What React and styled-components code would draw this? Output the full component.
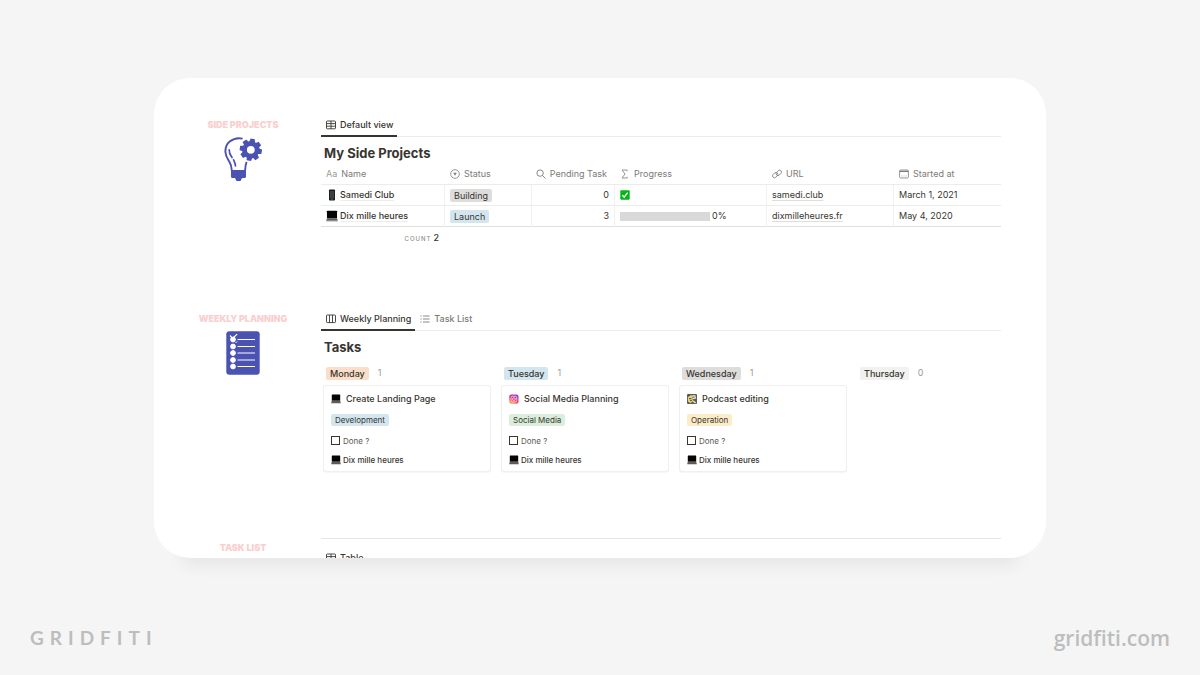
import { useState } from 'react';
import styled, { createGlobalStyle } from 'styled-components';

const GlobalStyle = createGlobalStyle`
	* {
		box-sizing: border-box;
	}

	body {
		margin: 0;
		background: #f5f5f5;
		color: #37352f;
		font-family: Inter, 'Liberation Sans', sans-serif;
		font-size: 9px;
		line-height: 20px;
	}

	button,
	input {
		font: inherit;
		color: inherit;
	}

	svg {
		display: block;
		flex-shrink: 0;
	}
`;

const Page = styled.div`
	display: flex;
	flex-direction: column;
	height: 100vh;
	padding: 78px 30px 0;
`;

const Sheet = styled.main`
	flex: 1;
	min-height: 0;
	margin: 0 124px;
	padding: 36px 45px 0 22px;
	overflow: hidden;
	background: #fff;
	border-radius: 36px;
	box-shadow: 0 34px 16px -26px rgba(0, 0, 0, 0.06);
`;

const Footer = styled.footer`
	display: flex;
	align-items: center;
	justify-content: space-between;
	height: 117px;
	padding-top: 42px;
	color: #bdbdbd;
`;

const Brand = styled.span`
	font-family: Lato, sans-serif;
	font-size: 19px;
	font-weight: 700;
	letter-spacing: 6px;
`;

const SiteLink = styled.a`
	color: inherit;
	font-family: 'Open Sans', sans-serif;
	font-size: 21px;
	font-weight: 600;
	text-decoration: none;
`;

const Section = styled.section`
	display: grid;
	grid-template-columns: 134px minmax(0, 1fr);
	column-gap: 11px;
	padding-bottom: 59px;
`;

const Aside = styled.div`
	display: flex;
	flex-direction: column;
	align-items: center;
	gap: 2px;
	padding-top: 1px;
`;

const AsideTitle = styled.h2`
	margin: 0;
	color: #f9cfd0;
	font-size: 9px;
	font-weight: 900;
	line-height: 20px;
	text-transform: uppercase;
`;

const Content = styled.div`
	${({ $divided }) => $divided && 'padding-top: 8px; margin-top: 1px; border-top: 1px solid #e6e6e5;'}
`;

const Tabs = styled.div`
	display: flex;
	height: 23px;
	border-bottom: 1px solid #ececeb;
`;

const Tab = styled.button`
	display: flex;
	align-items: center;
	gap: 4px;
	height: 23px;
	padding: 0 4px 0 5px;
	border: 0;
	border-bottom: 2px solid ${({ $active }) => ($active ? '#37352f' : 'transparent')};
	background: none;
	color: ${({ $active }) => ($active ? '#37352f' : '#7c7b77')};
	font-weight: 500;
	cursor: pointer;
`;

const Heading = styled.h3`
	margin: 0;
	padding: 6px 3px 0;
	font-size: 13px;
	font-weight: 700;
	line-height: 20px;
`;

const Table = styled.table`
	width: 100%;
	table-layout: fixed;
	border-spacing: 0;
`;

const HeadCell = styled.th`
	width: ${({ $width }) => $width || 'auto'};
	height: 22px;
	padding: 0 ${({ $end }) => ($end ? '8px' : '5px')} 0 5px;
	border-bottom: 1px solid #ececeb;
	color: #7c7b77;
	font-weight: 400;
	text-align: left;
`;

const HeadLabel = styled.span`
	display: flex;
	align-items: center;
	justify-content: ${({ $end }) => ($end ? 'flex-end' : 'flex-start')};
	gap: 4px;
	white-space: nowrap;
`;

const TextGlyph = styled.span`
	color: #9b9a97;
`;

const Cell = styled.td`
	height: 21px;
	padding: 0 5px;
	border-right: 1px solid #f1f1f0;
	border-bottom: 1px solid ${({ $last }) => ($last ? '#dfdfde' : '#ececeb')};
	text-align: ${({ $end }) => ($end ? 'right' : 'left')};

	&:last-child {
		border-right: 0;
	}
`;

const CellRow = styled.div`
	display: flex;
	align-items: center;
	gap: 2px;
`;

const ProjectName = styled.span`
	font-weight: 500;
	text-decoration: underline;
	text-decoration-color: #ededec;
	text-underline-offset: 2px;
`;

const CellLink = styled.a`
	color: inherit;
	text-decoration: underline;
	text-decoration-color: #dededc;
	text-underline-offset: 2px;
`;

const Track = styled.span`
	width: 90px;
	height: 9px;
	background: #d9d9d9;
`;

const Fill = styled.span`
	display: block;
	height: 100%;
	background: #00b312;
`;

const FootCell = styled.td`
	height: 22px;
	padding: 0 6px;
	font-size: 9px;
	font-weight: 500;
	text-align: right;
`;

const CountLabel = styled.span`
	margin-right: 2px;
	color: #8f8e8b;
	font-size: 6px;
	font-weight: 500;
	letter-spacing: 1px;
	text-transform: uppercase;
`;

const tones = {
	gray: '#dedddb',
	light: '#f1f1ef',
	blue: '#d3e5ef',
	orange: '#fadec9',
	green: '#dbeddb',
	yellow: '#fdecc8',
};

const Pill = styled.span`
	padding: 0 4px;
	border-radius: 2px;
	background: ${({ $tone }) => tones[$tone]};
	font-size: ${({ $small }) => ($small ? '8px' : '9px')};
	font-weight: ${({ $bold }) => ($bold ? 500 : 400)};
	line-height: ${({ $small }) => ($small ? '12px' : '13px')};
`;

const Board = styled.div`
	display: flex;
	gap: 12px;
	padding: 6px 0 7px 3px;
	overflow: hidden;
`;

const Column = styled.div`
	flex: 0 0 166px;
`;

const ColumnHead = styled.div`
	display: flex;
	align-items: center;
	gap: 9px;
	height: 20px;
	margin-bottom: 3px;
	padding-left: 2px;
	color: #9b9a97;
`;

const ColumnPill = styled(Pill)`
	color: #37352f;
`;

const Card = styled.article`
	display: flex;
	flex-direction: column;
	align-items: flex-start;
	padding: 3px 7px 2px;
	border-radius: 2px;
	box-shadow: 0 0 0 1px #f0f0f0, 0 1px 2px rgba(15, 15, 15, 0.14);
	font-size: 8px;
`;

const CardTitle = styled.h4`
	display: flex;
	align-items: center;
	gap: 5px;
	margin: 0;
	font-size: 9px;
	font-weight: 500;
	line-height: 20px;
`;

const CardTag = styled.div`
	display: flex;
	align-items: center;
	height: 22px;
`;

const CardLine = styled.div`
	display: flex;
	align-items: center;
	gap: 2px;
	height: 19px;
`;

const CheckLabel = styled.label`
	display: flex;
	align-items: center;
	gap: 3px;
	height: 19px;
	color: #5a5955;
`;

const Checkbox = styled.input.attrs({ type: 'checkbox' })`
	appearance: none;
	width: 9px;
	height: 9px;
	margin: 0;
	border: 1px solid #37352f;

	&:checked {
		background: #2eaadc;
	}
`;

const Relation = styled.span`
	font-weight: 500;
`;

const LineIcon = ({ children, size = 10, width = 1 }) => (
	<svg width={size} height={size} viewBox="0 0 10 10" fill="none" stroke="currentColor" strokeWidth={width} aria-hidden="true">
		{children}
	</svg>
);

const TableIcon = () => (
	<LineIcon width={0.9}>
		<rect x="0.5" y="1" width="9" height="7.8" rx="0.8" />
		<path d="M.5 3.6h9M.5 6.200h9M5 1v7.800" />
	</LineIcon>
);

const BoardIcon = () => (
	<LineIcon width={0.9}>
		<rect x="0.5" y="1" width="9" height="7.6" rx="0.8" />
		<path d="M3.5 1v7.6M6.5 1v7.6" />
	</LineIcon>
);

const ListIcon = () => (
	<LineIcon width={0.9}>
		<path d="M.4 2h1.2M.4 5h1.2M.4 8h1.2M3 2h6.6M3 5h6.6M3 8h6.6" />
	</LineIcon>
);

const SelectIcon = () => (
	<LineIcon width={0.8}>
		<circle cx="5" cy="5" r="4.3" />
		<path d="M3.2 3.800h3.600L5 6.800z" fill="currentColor" stroke="none" />
	</LineIcon>
);

const SearchIcon = () => (
	<LineIcon width={0.9}>
		<circle cx="4.1" cy="4.1" r="3.2" />
		<path d="M6.5 6.5l3 3" />
	</LineIcon>
);

const SigmaIcon = () => (
	<LineIcon width={0.8}>
		<path d="M7.2 2.2V1H2l3 4-3 4h5.2V7.8" />
	</LineIcon>
);

const LinkIcon = () => (
	<LineIcon width={0.8}>
		<rect x="0.2" y="4.2" width="6" height="3.8" rx="1.9" transform="rotate(-45 3.2 6.1)" />
		<rect x="3.8" y="2" width="6" height="3.8" rx="1.9" transform="rotate(-45 6.8 3.9)" />
	</LineIcon>
);

const CalendarIcon = () => (
	<LineIcon width={0.8}>
		<rect x="0.6" y="1" width="8.8" height="8" rx="1.2" />
		<path d="M.6 2.4h8.8" strokeWidth="1.4" />
		<path d="M2.5 7h1M4.500 7h1M6.500 7h1" strokeWidth="0.5" />
	</LineIcon>
);

const PhoneIcon = () => (
	<svg width="12" height="12" viewBox="0 0 12 12" aria-hidden="true">
		<rect x="3" y="0.5" width="6" height="11" rx="0.8" fill="#1d1f1e" />
		<rect x="4" y="2" width="4" height="7.6" fill="#3a403d" />
		<path d="M5.2 10.6h1.8" stroke="#777" strokeWidth="0.6" />
	</svg>
);

const LaptopIcon = ({ size = 10 }) => (
	<svg width={size} height={size} viewBox="0 0 10 10" aria-hidden="true">
		<rect x="0.8" y="0.6" width="8.400" height="6.200" rx="0.4" fill="#050505" />
		<path d="M.8 6.800h8.400l.6 2.200H.2z" fill="#5c5c5c" />
		<path d="M.2 9h9.600v.5H.2z" fill="#a8a8a8" />
	</svg>
);

const CheckMarkIcon = () => (
	<svg width="10" height="10" viewBox="0 0 10 10" aria-hidden="true">
		<rect x="0.3" y="0.3" width="9.4" height="9.4" rx="1" fill="#05b416" />
		<path d="M2.4 5.2l1.8 2L7.6 2.6" fill="none" stroke="#fff" strokeWidth="1.3" />
	</svg>
);

const InstagramIcon = () => (
	<svg width="10" height="10" viewBox="0 0 10 10" aria-hidden="true">
		<defs>
			<linearGradient id="insta" x1="0.2" y1="1" x2="0.7" y2="0">
				<stop offset="0" stopColor="#fdb03c" />
				<stop offset="0.45" stopColor="#ec2f72" />
				<stop offset="1" stopColor="#8a3bd0" />
			</linearGradient>
		</defs>
		<rect x="0.3" y="0.5" width="9.2" height="9.2" rx="2" fill="url(#insta)" />
		<g fill="none" stroke="#fff" strokeWidth="0.7">
			<rect x="2" y="2.2" width="5.8" height="5.8" rx="1.6" />
			<circle cx="4.9" cy="5.1" r="1.4" />
		</g>
	</svg>
);

const PodcastIcon = () => (
	<svg width="10" height="10" viewBox="0 0 10 10" aria-hidden="true">
		<rect width="10" height="10" rx="1" fill="#5c5d52" />
		<path d="M.8 3.2l2.4-2 3 .6-1 2.4 1 2.6-2.6 2.4-2.6-1.6z" fill="#e3d27a" />
		<path d="M5.600 1.6l3 .6M5.6 4.6l3.4-.8M6 7l2.600 1.800" stroke="#efecdc" strokeWidth="1.4" />
		<path d="M2 4.6h2.4M3 6.4h2M1 .8l1.4 1" stroke="#33352f" strokeWidth="0.8" />
	</svg>
);

const teeth = [0, 45, 90, 135, 180, 225, 270, 315];

const IdeaIcon = () => (
	<svg width="38" height="44" viewBox="0 0 38 44" fill="none" stroke="#4a52b2" aria-hidden="true">
		<path d="M18.600 1.700C14.400.6 9.400 1.700 5.700 4.600C2.600 7.200 1.200 10.800 1.400 15C1.600 19.200 3.600 21.800 5.300 24.600C7 27.400 7.600 29.600 7.800 33.500" strokeWidth="1.900" />
		<path d="M22.600 24.800C21.500 27.400 21.300 30 21.100 33.500" strokeWidth="1.900" />
		<path d="M5.200 12.800C5 16.500 6.200 18.300 8 20.600M9.600 22.800C10.600 24.800 11.200 26.600 11.500 28.800" strokeWidth="1.700" strokeLinecap="round" />
		<g fill="#4a52b2" stroke="none">
			<path d="M7 33h15v6.500q0 1.500-1.500 1.500h-2.500l-1.500 3h-4l-1.500-3h-2.500Q7 41 7 39.500z" />
			{teeth.map((angle) => (
				<path key={angle} d="M23.900 5.500L24.600 1.700h4.400L29.700 5.500z" transform={`rotate(${angle + 10} 26.800 12.800)`} />
			))}
		</g>
		<circle cx="26.800" cy="12.800" r="6.300" strokeWidth="4.800" />
	</svg>
);

const ChecklistIcon = () => (
	<svg width="34" height="44" viewBox="0 0 34 44" aria-hidden="true">
		<rect x="0.3" y="0.3" width="33.400" height="43.400" rx="3" fill="#4a52b2" />
		<g stroke="#fff" strokeWidth="1" fill="#fff">
			{[8.500, 15.500, 22, 29, 35.500].map((y) => (
				<g key={y}>
					<circle cx="7" cy={y} r="2.400" />
					<path d={`M11.500 ${y}h17.500`} />
				</g>
			))}
		</g>
		<path d="M4 4.500l2.600 2.800 4.600-4.200" fill="none" stroke="#fff" strokeWidth="1.200" />
		<path d="M9.500 12l1.600-1.600" fill="none" stroke="#fff" strokeWidth="1" />
	</svg>
);

const projects = [
	{ name: 'Samedi Club', icon: <PhoneIcon />, status: 'Building', tone: 'gray', pending: 0, done: true, url: 'samedi.club', started: 'March 1, 2021' },
	{ name: 'Dix mille heures', icon: <LaptopIcon size={12} />, status: 'Launch', tone: 'blue', pending: 3, progress: 0, url: 'dixmilleheures.fr', started: 'May 4, 2020' },
];

const days = [
	{ day: 'Monday', tone: 'orange', tasks: [{ title: 'Create Landing Page', icon: <LaptopIcon />, tag: 'Development', tone: 'blue' }] },
	{ day: 'Tuesday', tone: 'blue', tasks: [{ title: 'Social Media Planning', icon: <InstagramIcon />, tag: 'Social Media', tone: 'green' }] },
	{ day: 'Wednesday', tone: 'gray', tasks: [{ title: 'Podcast editing', icon: <PodcastIcon />, tag: 'Operation', tone: 'yellow' }] },
	{ day: 'Thursday', tone: 'light', tasks: [] },
];

const ProjectsTable = () => (
	<Table>
		<thead>
			<tr>
				<HeadCell $width="124px">
					<HeadLabel>
						<TextGlyph>Aa</TextGlyph>Name
					</HeadLabel>
				</HeadCell>
				<HeadCell $width="87px">
					<HeadLabel><SelectIcon />Status</HeadLabel>
				</HeadCell>
				<HeadCell $width="83px" $end>
					<HeadLabel $end><SearchIcon />Pending Task</HeadLabel>
				</HeadCell>
				<HeadCell $width="152px">
					<HeadLabel><SigmaIcon />Progress</HeadLabel>
				</HeadCell>
				<HeadCell $width="127px">
					<HeadLabel><LinkIcon />URL</HeadLabel>
				</HeadCell>
				<HeadCell>
					<HeadLabel><CalendarIcon />Started at</HeadLabel>
				</HeadCell>
			</tr>
		</thead>
		<tbody>
			{projects.map((project, index) => {
				const last = index === projects.length - 1;
				return (
					<tr key={project.name}>
						<Cell $last={last}>
							<CellRow>
								{project.icon}
								<ProjectName>{project.name}</ProjectName>
							</CellRow>
						</Cell>
						<Cell $last={last}>
							<CellRow>
								<Pill $tone={project.tone}>{project.status}</Pill>
							</CellRow>
						</Cell>
						<Cell $last={last} $end>{project.pending}</Cell>
						<Cell $last={last}>
							<CellRow>
								{project.done ? (
									<CheckMarkIcon />
								) : (
									<>
										<Track>
											<Fill style={{ width: `${project.progress}%` }} />
										</Track>
										{project.progress}%
									</>
								)}
							</CellRow>
						</Cell>
						<Cell $last={last}>
							<CellLink href={`https://${project.url}`}>{project.url}</CellLink>
						</Cell>
						<Cell $last={last}>{project.started}</Cell>
					</tr>
				);
			})}
		</tbody>
		<tfoot>
			<tr>
				<FootCell>
					<CountLabel>Count</CountLabel>
					{projects.length}
				</FootCell>
			</tr>
		</tfoot>
	</Table>
);

const TaskCard = ({ task }) => (
	<Card>
		<CardTitle>
			{task.icon}
			{task.title}
		</CardTitle>
		<CardTag>
			<Pill $small $tone={task.tone}>{task.tag}</Pill>
		</CardTag>
		<CheckLabel>
			<Checkbox />
			Done ?
		</CheckLabel>
		<CardLine>
			<LaptopIcon />
			<Relation>Dix mille heures</Relation>
		</CardLine>
	</Card>
);

export default function App() {
	const [view, setView] = useState('board');

	return (
		<>
			<GlobalStyle />
			<Page>
				<Sheet>
					<Section>
						<Aside>
							<AsideTitle>Side Projects</AsideTitle>
							<IdeaIcon />
						</Aside>
						<Content>
							<Tabs>
								<Tab type="button" $active><TableIcon />Default view</Tab>
							</Tabs>
							<Heading>My Side Projects</Heading>
							<ProjectsTable />
						</Content>
					</Section>

					<Section>
						<Aside>
							<AsideTitle>Weekly Planning</AsideTitle>
							<ChecklistIcon />
						</Aside>
						<Content>
							<Tabs>
								<Tab type="button" $active={view === 'board'} onClick={() => setView('board')}>
									<BoardIcon />Weekly Planning
								</Tab>
								<Tab type="button" $active={view === 'list'} onClick={() => setView('list')}>
									<ListIcon />Task List
								</Tab>
							</Tabs>
							<Heading>Tasks</Heading>
							<Board>
								{days.map(({ day, tone, tasks }) => (
									<Column key={day}>
										<ColumnHead>
											<ColumnPill $bold $tone={tone}>{day}</ColumnPill>
											{tasks.length}
										</ColumnHead>
										{tasks.map((task) => <TaskCard key={task.title} task={task} />)}
									</Column>
								))}
							</Board>
						</Content>
					</Section>

					<Section>
						<Aside>
							<AsideTitle>Task List</AsideTitle>
						</Aside>
						<Content $divided>
							<Tabs>
								<Tab type="button" $active><TableIcon />Table</Tab>
							</Tabs>
						</Content>
					</Section>
				</Sheet>
				<Footer>
					<Brand>GRIDFITI</Brand>
					<SiteLink href="https://gridfiti.com">gridfiti.com</SiteLink>
				</Footer>
			</Page>
		</>
	);
}
